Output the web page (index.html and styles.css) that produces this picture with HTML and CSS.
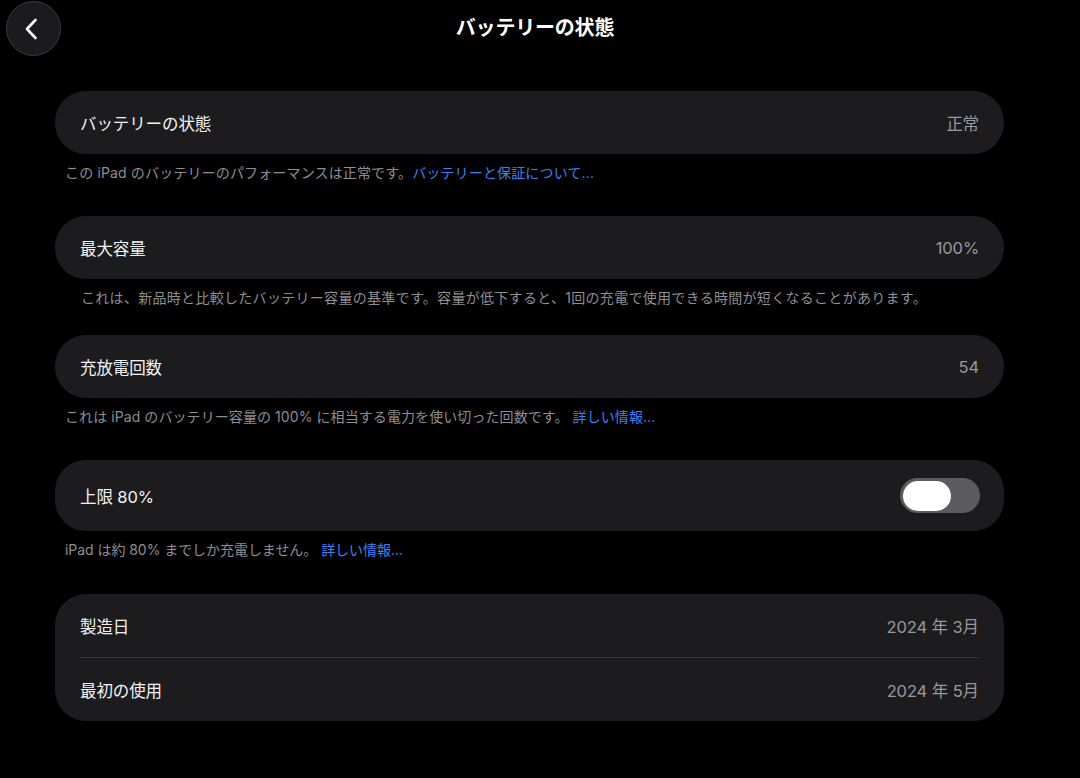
FILE: index.html
```html
<!DOCTYPE html>
<html lang="ja">
<head>
<meta charset="utf-8">
<title>バッテリーの状態</title>
<link rel="stylesheet" href="styles.css">
</head>
<body>
<header class="topbar">
  <button class="back" aria-label="戻る">
    <svg width="14" height="22" viewBox="0 0 14 22"><path d="M10.5 2 L2 11 L10.5 20" fill="none" stroke="#fff" stroke-width="2.6" stroke-linecap="round" stroke-linejoin="round"/></svg>
  </button>
  <h1 class="title">バッテリーの状態</h1>
</header>

<main class="content">
  <section class="card">
    <div class="row"><span class="label">バッテリーの状態</span><span class="value">正常</span></div>
  </section>
  <p class="note note-1">この iPad のバッテリーのパフォーマンスは正常です。<a class="link">バッテリーと保証について...</a></p>

  <section class="card">
    <div class="row"><span class="label">最大容量</span><span class="value">100%</span></div>
  </section>
  <p class="note note-indent">これは、新品時と比較したバッテリー容量の基準です。容量が低下すると、1回の充電で使用できる時間が短くなることがあります。</p>

  <section class="card">
    <div class="row"><span class="label">充放電回数</span><span class="value">54</span></div>
  </section>
  <p class="note note-3">これは iPad のバッテリー容量の 100% に相当する電力を使い切った回数です。 <a class="link">詳しい情報...</a></p>

  <section class="card">
    <div class="row row-toggle"><span class="label">上限 80%</span><span class="toggle"><span class="knob"></span></span></div>
  </section>
  <p class="note note-4">iPad は約 80% までしか充電しません。 <a class="link">詳しい情報...</a></p>

  <section class="card">
    <div class="row"><span class="label">製造日</span><span class="value">2024 年 3月</span></div>
    <div class="sep"></div>
    <div class="row"><span class="label">最初の使用</span><span class="value">2024 年 5月</span></div>
  </section>
</main>
</body>
</html>
```

FILE: styles.css
```css
* { box-sizing: border-box; }
html, body {
  margin: 0;
  background: #000;
}
body {
  width: 1080px;
  height: 778px;
  overflow: hidden;
  font-family: Inter, "Noto Sans CJK JP", sans-serif;
  color: #fff;
}
.topbar {
  position: relative;
  height: 56px;
  display: flex;
  align-items: center;
  justify-content: center;
}
.back {
  position: absolute;
  left: 6px;
  top: 1px;
  width: 55px;
  height: 55px;
  border-radius: 50%;
  background: #1b1b1d;
  border: 1px solid #3a3a3c;
  display: flex;
  align-items: center;
  justify-content: center;
  padding: 0 3px 0 0;
}
.title {
  margin: 0;
  padding-right: 10px;
  font-size: 20px;
  font-weight: 700;
  letter-spacing: -0.2px;
  line-height: 1;
}
.content {
  margin-left: 55px;
  width: 949px;
  padding-top: 35px;
}
.card {
  background: #1c1c1e;
  border-radius: 31px;
}
.row {
  height: 63px;
  display: flex;
  align-items: center;
  justify-content: space-between;
  padding: 0 25px;
}
.row-toggle {
  height: 71px;
  padding-right: 24px;
}
.label {
  font-size: 16.5px;
  color: #f2f2f4;
  letter-spacing: -0.1px;
}
.value {
  font-size: 16.5px;
  color: #98989e;
  letter-spacing: -0.1px;
}
.sep {
  height: 1px;
  margin: 0 25px;
  background: #3a3a3c;
}
.note {
  margin: 8px 0 32px;
  padding-left: 10px;
  font-size: 14px;
  line-height: 22px;
  color: #8e8e93;
  letter-spacing: 0.25px;
}
.note-1 { letter-spacing: 0.15px; }
.note-indent {
  padding-left: 26px;
  margin-bottom: 26px;
  letter-spacing: 0.3px;
}
.note-3 { margin-bottom: 32px; letter-spacing: 0.08px; }
.note-4 { margin-bottom: 33px; letter-spacing: -0.05px; }
.link {
  color: #3b82f6;
}
.toggle {
  width: 80px;
  height: 35px;
  border-radius: 18px;
  background: #5b5b60;
  padding: 3px;
  display: flex;
  align-items: center;
}
.knob {
  width: 48px;
  height: 30px;
  border-radius: 15px;
  background: #fff;
}
```
